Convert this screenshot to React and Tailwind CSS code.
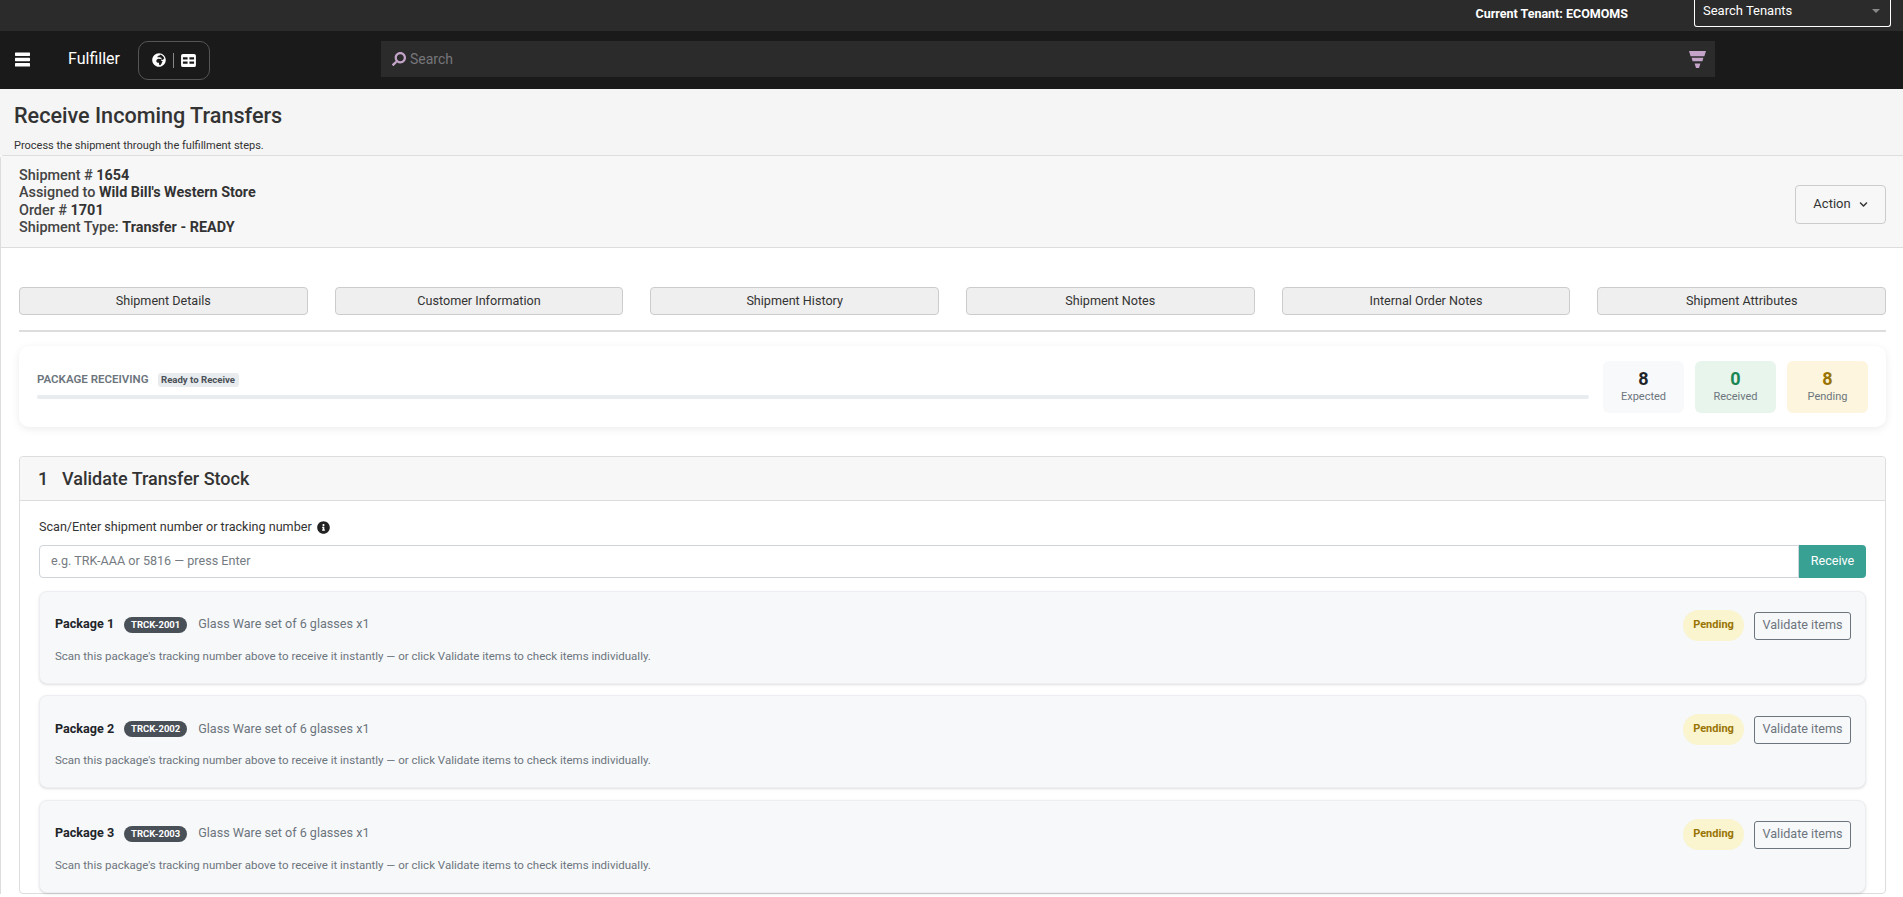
import React from "react";
import { FaGlobeAfrica, FaSearch, FaInfoCircle, FaChevronDown } from "react-icons/fa";

const tabs = [
  "Shipment Details",
  "Customer Information",
  "Shipment History",
  "Shipment Notes",
  "Internal Order Notes",
  "Shipment Attributes",
];

const packages = [
  { name: "Package 1", code: "TRCK-2001" },
  { name: "Package 2", code: "TRCK-2002" },
  { name: "Package 3", code: "TRCK-2003" },
];

const BarsIcon = () => (
  <svg viewBox="0 0 15 15" className="w-[15px] h-[15px]" fill="#fff">
    <rect x="0" y="0.5" width="15" height="3.4" rx="0.6" />
    <rect x="0" y="5.8" width="15" height="3.4" rx="0.6" />
    <rect x="0" y="11.1" width="15" height="3.4" rx="0.6" />
  </svg>
);

const TableIcon = () => (
  <svg viewBox="0 0 16 14" className="w-[15px] h-[13px]" fill="#fff">
    <path d="M2 0h12a2 2 0 0 1 2 2v10a2 2 0 0 1-2 2H2a2 2 0 0 1-2-2V2a2 2 0 0 1 2-2zm0 3.5V6h5V3.5H2zm7 0V6h5V3.5H9zM2 8v2.5h5V8H2zm7 0v2.5h5V8H9z" fillRule="evenodd" />
  </svg>
);

const FunnelIcon = () => (
  <svg viewBox="0 0 17 17" className="w-[17px] h-[17px]" fill="#c4a5c9">
    <path d="M0 0h17l-1.6 5.2H1.6z" />
    <path d="M2.6 6.8h11.8l-1 3.4H3.6z" />
    <path d="M5.6 12.6h5.8l-1.4 4.4H7z" />
  </svg>
);

const Stat = ({ value, label, bg, color }) => (
  <div className={`w-[81px] h-[52px] pb-[2px] rounded-md flex flex-col items-center justify-center ${bg}`}>
    <span className={`text-[18px] leading-[22px] font-bold ${color}`}>{value}</span>
    <span className="text-[11px] leading-[14px] text-[#6c757d]">{label}</span>
  </div>
);

const PackageRow = ({ name, code }) => (
  <div className="h-[93px] rounded-lg border border-[#eceef1] bg-[#f7f8fa] shadow-sm pl-[15px] pr-[14px] flex items-start justify-between">
    <div className="pt-[23px]">
      <div className="flex items-center h-[20px]">
        <span className="text-[12.6px] font-bold text-[#212529]">{name}</span>
        <span className="ml-[10px] h-[16px] w-[63px] rounded-full bg-[#495057] text-white text-[9.5px] font-bold flex items-center justify-center">
          {code}
        </span>
        <span className="ml-[11px] text-[12.6px] text-[#6c757d]">Glass Ware set of 6 glasses x1</span>
      </div>
      <p className="mt-[13px] text-[11.5px] leading-[16px] text-[#6c757d]">
        Scan this package's tracking number above to receive it instantly — or click Validate items to check items individually.
      </p>
    </div>
    <div className="pt-[18px] flex items-start gap-[10px]">
      <span className="h-[31px] w-[61px] rounded-full bg-[#faf4cf] text-[#997404] text-[11px] font-bold flex items-center justify-center">
        Pending
      </span>
      <button className="mt-[2px] h-[28px] w-[97px] pb-[1px] rounded-[3px] border border-[#6c757d] text-[12.6px] text-[#6c757d]">
        Validate items
      </button>
    </div>
  </div>
);

export default function App() {
  return (
    <div className="h-screen overflow-hidden bg-white font-['Roboto',sans-serif] text-[#333]">
      {/* Top bar */}
      <div className="h-[31px] bg-[#2b2b2b] flex justify-end pr-[12px] overflow-hidden">
        <span className="mr-[66px] mt-[5px] text-[12.5px] font-bold text-white">Current Tenant: ECOMOMS</span>
        <div className="w-[197px] h-[27px] border-x border-b border-white rounded-b-[3px] flex justify-between pl-[8px] pr-[10px] text-[13px] text-white">
          <span className="leading-[21px]">Search Tenants</span>
          <span className="mt-[9px] w-0 h-0 border-x-[4px] border-x-transparent border-t-[4px] border-t-[#888]" />
        </div>
      </div>

      {/* Nav */}
      <div className="h-[58px] bg-[#1a1a1a] flex items-center text-white">
        <span className="ml-[15px] pb-[1px]"><BarsIcon /></span>
        <span className="ml-[38px] pb-[2px] text-[16px]">Fulfiller</span>
        <div className="ml-[18px] w-[72px] h-[39px] rounded-[10px] border border-[#555] flex items-center justify-center gap-[7px]">
          <FaGlobeAfrica className="w-[14px] h-[14px]" />
          <span className="w-px h-[15px] bg-[#888]" />
          <TableIcon />
        </div>
        <div className="ml-[171px] mb-[2px] w-[1334px] h-[36px] bg-[#2b2b2b] flex items-center pl-[11px] pr-[9px]">
          <FaSearch className="w-[14px] h-[14px] text-[#c4a5c9] -scale-x-100" />
          <span className="ml-[4px] text-[14px] text-[#77767a]">Search</span>
          <span className="ml-auto"><FunnelIcon /></span>
        </div>
      </div>

      {/* Page heading */}
      <div className="h-[66px] bg-[#f5f5f5] pl-[14px]">
        <h1 className="pt-[13px] text-[21.6px] leading-[28px] font-medium text-[#333]">Receive Incoming Transfers</h1>
        <p className="mt-[9px] text-[11px] leading-[14px] text-[#333]">Process the shipment through the fulfillment steps.</p>
      </div>

      <div className="border-l border-t border-[#ddd] rounded-tl-[4px]">
        {/* Shipment header */}
        <div className="h-[92px] bg-[#f7f7f7] border-b border-[#ddd] pl-[18px] pr-[17px] flex items-center justify-between">
          <div className="text-[14.4px] leading-[17.2px] font-medium text-[#444]">
            <div>Shipment # <span className="font-bold text-[#333]">1654</span></div>
            <div>Assigned to <span className="font-bold text-[#333]">Wild Bill's Western Store</span></div>
            <div>Order # <span className="font-bold text-[#333]">1701</span></div>
            <div>Shipment Type: <span className="font-bold text-[#333]">Transfer - READY</span></div>
          </div>
          <button className="w-[91px] h-[39px] mt-[5px] rounded-[4px] border border-[#ccc] flex items-center justify-center gap-[8px] text-[13px] text-[#333]">
            Action <FaChevronDown className="w-[9px] h-[9px]" />
          </button>
        </div>

        <div className="pl-[18px] pr-[17px]">
          {/* Tabs */}
          <div className="pt-[39px] grid grid-cols-6 gap-[27px]">
            {tabs.map((t) => (
              <button key={t} className="h-[28px] rounded-[4px] border border-[#ccc] bg-[#efefef] text-[12.6px] text-[#333]">
                {t}
              </button>
            ))}
          </div>
          <div className="mt-[15px] h-[2px] bg-[#ddd]" />

          {/* Progress */}
          <div className="mt-[14px] h-[81px] rounded-[10px] bg-white shadow-[0_2px_8px_rgba(0,0,0,0.08)] pl-[18px] pr-[18px] flex items-center">
            <div className="flex-1">
              <div className="flex items-center h-[16px] mt-[-2px]">
                <span className="text-[11.5px] font-semibold text-[#6c757d]">PACKAGE RECEIVING</span>
                <span className="ml-[9px] h-[14px] w-[81px] rounded-[3px] bg-[#e9ecef] text-[9.6px] font-bold text-[#495057] flex items-center justify-center">
                  Ready to Receive
                </span>
              </div>
              <div className="mt-[7px] h-[4px] rounded-full bg-[#e9ecef]" />
            </div>
            <div className="ml-[14px] flex gap-[11px]">
              <Stat value="8" label="Expected" bg="bg-[#f8f9fa]" color="text-[#212529]" />
              <Stat value="0" label="Received" bg="bg-[#e8f5ec]" color="text-[#198754]" />
              <Stat value="8" label="Pending" bg="bg-[#fdf5dd]" color="text-[#997404]" />
            </div>
          </div>

          {/* Step 1 */}
          <div className="mt-[29px] border border-[#ddd] rounded-[4px]">
            <div className="h-[44px] bg-[#f7f7f7] border-b border-[#ddd] flex items-center pl-[18px] pb-[1px] text-[18px] font-medium text-[#333] rounded-t-[4px]">
              <span className="w-[24px]">1</span>
              <span>Validate Transfer Stock</span>
            </div>
            <div className="px-[19px]">
              <div className="pt-[9px] flex items-center h-[44px] text-[12.6px] text-[#333]">
                Scan/Enter shipment number or tracking number
                <FaInfoCircle className="ml-[5px] w-[13px] h-[13px] text-[#222]" />
              </div>
              <div className="flex h-[33px]">
                <input
                  placeholder="e.g. TRK-AAA or 5816 — press Enter"
                  className="flex-1 border border-[#ced4da] rounded-l-[4px] pl-[11px] text-[12.6px] bg-white outline-none placeholder:text-[#757b82]"
                />
                <button className="w-[67px] bg-[#38a193] rounded-r-[4px] text-white text-[12.6px]">Receive</button>
              </div>
              <div className="mt-[12.7px] flex flex-col gap-[11.5px]">
                {packages.map((p) => (
                  <PackageRow key={p.code} name={p.name} code={p.code} />
                ))}
              </div>
            </div>
          </div>
        </div>
      </div>
    </div>
  );
}
